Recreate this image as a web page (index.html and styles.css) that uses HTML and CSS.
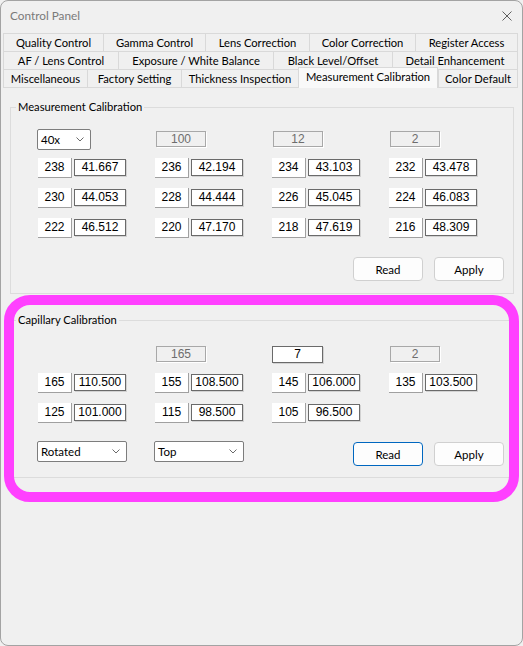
FILE: index.html
```html
<!DOCTYPE html>
<html>
<head>
<meta charset="utf-8">
<title>Control Panel</title>
<link rel="stylesheet" href="styles.css">
</head>
<body>
<div class="window">
  <div class="titlebar">
    <span class="title">Control Panel</span>
    <svg class="close" width="10" height="10" viewBox="0 0 10 10"><path d="M0.5 0.5 L9.5 9.5 M9.5 0.5 L0.5 9.5" fill="none" stroke="#5f5f5f" stroke-width="1"/></svg>
  </div>
  <div class="tabs">
    <div class="tabrow r1">
      <div class="tab">Quality Control</div>
      <div class="tab">Gamma Control</div>
      <div class="tab">Lens Correction</div>
      <div class="tab">Color Correction</div>
      <div class="tab last">Register Access</div>
    </div>
    <div class="tabrow r2">
      <div class="tab">AF / Lens Control</div>
      <div class="tab">Exposure / White Balance</div>
      <div class="tab">Black Level/Offset</div>
      <div class="tab last">Detail Enhancement</div>
    </div>
    <div class="tabrow r3">
      <div class="tab">Miscellaneous</div>
      <div class="tab">Factory Setting</div>
      <div class="tab">Thickness Inspection</div>
      <div class="tab active">Measurement Calibration</div>
      <div class="tab last">Color Default</div>
    </div>
  </div>
  <div class="page">
    <fieldset class="group g1">
      <legend>Measurement Calibration</legend>
      <div class="grid rows4">
        <div class="cell"><div class="select s40"><span>40x</span><svg width="8" height="5" viewBox="0 0 8 5"><path d="M0.5 0.5 L4 4 L7.5 0.5" fill="none" stroke="#6a6a6a"/></svg></div></div>
        <div class="cell"><div class="dis">100</div></div>
        <div class="cell"><div class="dis">12</div></div>
        <div class="cell"><div class="dis">2</div></div>

        <div class="pair"><div class="num">238</div><div class="val">41.667</div></div>
        <div class="pair"><div class="num">236</div><div class="val">42.194</div></div>
        <div class="pair"><div class="num">234</div><div class="val">43.103</div></div>
        <div class="pair"><div class="num">232</div><div class="val">43.478</div></div>

        <div class="pair"><div class="num">230</div><div class="val">44.053</div></div>
        <div class="pair"><div class="num">228</div><div class="val">44.444</div></div>
        <div class="pair"><div class="num">226</div><div class="val">45.045</div></div>
        <div class="pair"><div class="num">224</div><div class="val">46.083</div></div>

        <div class="pair"><div class="num">222</div><div class="val">46.512</div></div>
        <div class="pair"><div class="num">220</div><div class="val">47.170</div></div>
        <div class="pair"><div class="num">218</div><div class="val">47.619</div></div>
        <div class="pair"><div class="num">216</div><div class="val">48.309</div></div>
      </div>
      <div class="actions a1">
        <button class="btn">Read</button>
        <button class="btn">Apply</button>
      </div>
    </fieldset>

    <fieldset class="group g2">
      <legend>Capillary Calibration</legend>
      <div class="grid rows3">
        <div class="cell"></div>
        <div class="cell"><div class="dis">165</div></div>
        <div class="cell"><div class="edit">7</div></div>
        <div class="cell"><div class="dis">2</div></div>

        <div class="pair"><div class="num">165</div><div class="val">110.500</div></div>
        <div class="pair"><div class="num">155</div><div class="val">108.500</div></div>
        <div class="pair"><div class="num">145</div><div class="val">106.000</div></div>
        <div class="pair"><div class="num">135</div><div class="val">103.500</div></div>

        <div class="pair"><div class="num">125</div><div class="val">101.000</div></div>
        <div class="pair"><div class="num">115</div><div class="val">98.500</div></div>
        <div class="pair"><div class="num">105</div><div class="val">96.500</div></div>
        <div class="cell"></div>
      </div>
      <div class="actions a2">
        <div class="select wide first"><span>Rotated</span><svg width="8" height="5" viewBox="0 0 8 5"><path d="M0.5 0.5 L4 4 L7.5 0.5" fill="none" stroke="#6a6a6a"/></svg></div>
        <div class="select wide second"><span>Top</span><svg width="8" height="5" viewBox="0 0 8 5"><path d="M0.5 0.5 L4 4 L7.5 0.5" fill="none" stroke="#6a6a6a"/></svg></div>
        <div class="buttons">
          <button class="btn focus">Read</button>
          <button class="btn">Apply</button>
        </div>
      </div>
    </fieldset>
  </div>
  <div class="highlight"></div>
</div>
</body>
</html>
```

FILE: styles.css
```css
* { box-sizing: border-box; }
html, body { margin: 0; padding: 0; background: #f0f0f0; }
body {
  width: 523px; height: 646px; overflow: hidden;
  font-family: Lato, "Liberation Sans", sans-serif;
  font-size: 11px; color: #000;
}
.window {
  position: relative;
  width: 523px; height: 646px;
  border: 1px solid #a3a3a3;
  border-radius: 8px;
  background: #f0f0f0;
  overflow: hidden;
}
.titlebar {
  height: 32px;
  display: flex;
  justify-content: space-between;
  align-items: flex-start;
  padding: 7px 10px 0 9px;
}
.title { color: #7a7a7a; font-size: 11.8px; line-height: 16px; }
.close { display: block; margin-top: 3px; }

.tabs { padding: 0 4px 0 2px; }
.tabrow { display: grid; height: 18px; }
.r1 { grid-template-columns: 100px 102px 104px 106px 103px; }
.r2 { grid-template-columns: 115px 155px 119px 126px; }
.r3 { grid-template-columns: 84px 94px 117px 140px 80px; }
.tab {
  border-top: 1px solid #d9d9d9;
  border-left: 1px solid #d9d9d9;
  text-align: center;
  line-height: 17px;
  font-size: 11.2px;
  white-space: nowrap;
  background: #f0f0f0;
}
.tab.last { border-right: 1px solid #d9d9d9; }
.tab.active {
  margin-top: -2px;
  margin-bottom: -1px;
  border-right: 1px solid #d9d9d9;
  background: #f9f9f9;
  padding-bottom: 3px;
  z-index: 1;
  position: relative;
}
.page {
  border-top: 1px solid #d9d9d9;
  margin: 0 4px 0 2px;
  padding: 12px 4px 0 7px;
}
.group {
  margin: 0;
  min-width: 0;
  border: 1px solid #dcdcdc;
  padding: 15px 9px 12px 5px;
}
.group legend {
  padding: 0 2px;
  line-height: 14px;
  font-size: 11.2px;
}
.g2 { margin-top: 19px; padding-top: 17px; padding-bottom: 11px; }

.grid {
  display: grid;
  grid-template-columns: 117px 117px 117px 1fr;
  row-gap: 11px;
  padding-left: 22px;
}
.rows4 { grid-template-rows: 18px 19px 19px 19px; }
.rows3 { grid-template-rows: 18px 19px 19px; }
.cell { display: flex; align-items: flex-end; }
.pair { display: flex; gap: 2px; align-items: flex-start; }

.num, .val, .dis, .edit {
  font-family: "Liberation Sans", Arial, sans-serif;
  font-size: 12px;
  text-align: center;
}
.num {
  width: 34px; height: 20px;
  background: #fff;
  border-right: 1px solid #a0a0a0;
  border-bottom: 1px solid #a0a0a0;
  line-height: 18px;
}
.val {
  width: 52px; height: 17px;
  margin-top: 1px;
  background: #fff;
  border: 1px solid #6a6a6a;
  box-shadow: 1px 1px 0 #d2d2d2;
  line-height: 15px;
}
.dis {
  margin-left: 1px;
  width: 50px; height: 16px;
  background: #f0f0f0;
  border: 1px solid #a8a8a8;
  box-shadow: 1px 1px 0 #fff;
  color: #6d6d6d;
  line-height: 14px;
}
.edit {
  width: 51px; height: 17px;
  background: #fff;
  border: 1px solid #6a6a6a;
  box-shadow: 1px 1px 0 #d2d2d2;
  line-height: 15px;
  margin-bottom: -1px;
}
.select {
  display: flex;
  align-items: center;
  justify-content: space-between;
  height: 21px;
  background: #fff;
  border: 1px solid #7d7d7d;
  border-radius: 2px;
  padding: 0 6px 0 3px;
  line-height: 19px;
  font-size: 11.5px;
  align-self: flex-start;
}
.s40 { width: 54px; margin-left: -1px; }
.wide { width: 90px; }
.first { margin-left: -1px; }
.second { margin-left: 27px; }

.actions { display: flex; align-items: flex-start; }
.a1 { justify-content: flex-end; gap: 11px; margin-top: 20px; }
.a2 { margin-top: 19px; padding-left: 22px; }
.buttons { margin-left: auto; margin-top: 1px; display: flex; gap: 11px; }
.btn {
  width: 70px; height: 24px;
  font-family: Lato, "Liberation Sans", sans-serif;
  font-size: 11.5px;
  color: #000;
  background: #fdfdfd;
  border: 1px solid #d0d0d0;
  border-radius: 4px;
  padding: 0;
}
.btn.focus { border-color: #0067c0; }

.highlight {
  position: absolute;
  left: 3px; top: 294px;
  width: 515px; height: 207px;
  border: 10px solid #ff40ff;
  border-radius: 26px;
  pointer-events: none;
}
```
